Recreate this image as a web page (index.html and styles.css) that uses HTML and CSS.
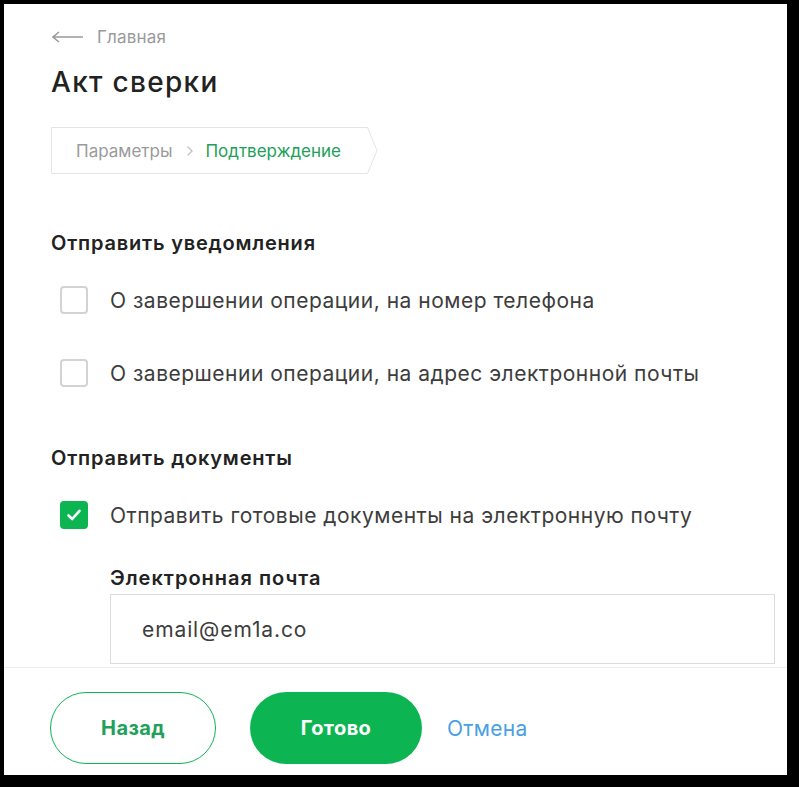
FILE: index.html
```html
<!DOCTYPE html>
<html lang="ru">
<head>
    <meta charset="UTF-8">
    <meta name="viewport" content="width=device-width, initial-scale=1.0">
    <title>Акт сверки</title>
    <link rel="stylesheet" href="styles.css">
</head>
<body>
    <div class="panel">
        <div class="content">
            <a class="back" href="#">
                <svg width="32" height="12" viewBox="0 0 32 12"><path d="M1 6H31M7 1L1 6L7 11" fill="none" stroke="#9a9a9a" stroke-width="1.5"/></svg>
                Главная
            </a>
            <h1 class="title">Акт сверки</h1>

            <div class="steps">
                <svg class="steps-frame" width="328" height="47" viewBox="0 0 328 47"><path d="M0.5 0.5H316.5L326 23.5L316.5 46.5H0.5Z" fill="none" stroke="#e4e4e4"/></svg>
                <span class="step">Параметры</span>
                <svg class="step-sep" width="8" height="12" viewBox="0 0 8 12"><path d="M1.5 1.5L6 6L1.5 10.5" fill="none" stroke="#c4c4c4" stroke-width="1.4"/></svg>
                <span class="step step-active">Подтверждение</span>
            </div>

            <h2 class="section">Отправить уведомления</h2>
            <label class="check">
                <span class="box"></span>
                О завершении операции, на номер телефона
            </label>
            <label class="check check-gap">
                <span class="box"></span>
                О завершении операции, на адрес электронной почты
            </label>

            <h2 class="section section-docs">Отправить документы</h2>
            <label class="check">
                <span class="box box-on">
                    <svg width="16" height="14" viewBox="0 0 16 14"><path d="M2.5 7.5L6.2 11L13.5 2.8" fill="none" stroke="#fff" stroke-width="2.6" stroke-linecap="round" stroke-linejoin="round"/></svg>
                </span>
                Отправить готовые документы на электронную почту
            </label>

            <div class="field">
                <div class="field-label">Электронная почта</div>
                <div class="input">email@em1a.co</div>
            </div>
        </div>

        <div class="footer">
            <button class="btn btn-outline">Назад</button>
            <button class="btn btn-primary">Готово</button>
            <a class="cancel" href="#">Отмена</a>
        </div>
    </div>
</body>
</html>
```

FILE: styles.css
```css
:root {
    --green: #0db552;
    --green-text: #21a05a;
    --text-color: #3d3d3d;
    --heading-color: #222;
    --muted: #9a9a9a;
    --line: #e4e4e4;
}

html, body {
    margin: 0;
    height: 100%;
}

body {
    background-color: #000;
    padding: 4px 12px 12px 4px;
    box-sizing: border-box;
    font-family: 'Inter', 'Roboto', sans-serif;
    color: var(--text-color);
}

.panel {
    background-color: #fff;
    height: 771px;
    display: flex;
    flex-direction: column;
    overflow: hidden;
}

.content {
    padding: 23px 0 0 47px;
    flex: none;
}

.back {
    display: flex;
    align-items: center;
    gap: 13px;
    height: 20px;
    color: var(--muted);
    text-decoration: none;
    font-size: 17px;
    letter-spacing: 0.2px;
    margin-left: 1px;
}

.title {
    margin: 18px 0 0;
    font-size: 28px;
    line-height: 34px;
    font-weight: 500;
    color: var(--heading-color);
    letter-spacing: 1.3px;
}

.steps {
    position: relative;
    margin-top: 28px;
    height: 47px;
    width: 328px;
    display: flex;
    align-items: center;
    padding-left: 25px;
    box-sizing: border-box;
    font-size: 17px;
}

.steps-frame {
    position: absolute;
    left: 0;
    top: 0;
}

.step {
    color: var(--muted);
}

.step-sep {
    margin: 0 11px 0 14px;
}

.step-active {
    color: var(--green-text);
}

.section {
    margin: 57px 0 0;
    font-size: 20px;
    line-height: 24px;
    font-weight: 600;
    color: var(--heading-color);
    letter-spacing: 0.8px;
}

.section-docs {
    margin-top: 59px;
}

.check {
    display: flex;
    align-items: center;
    gap: 22px;
    margin: 31px 0 0 9px;
    height: 28px;
    font-size: 21px;
    letter-spacing: 0.5px;
}

.check-gap {
    margin-top: 45px;
}

.box {
    width: 28px;
    height: 28px;
    box-sizing: border-box;
    border: 2px solid #d3d3d3;
    border-radius: 4px;
    flex: none;
    display: flex;
    align-items: center;
    justify-content: center;
}

.box-on {
    background-color: var(--green);
    border-color: var(--green);
}

.field {
    margin: 37px 0 0 59px;
}

.field-label {
    font-size: 20px;
    line-height: 24px;
    font-weight: 600;
    color: var(--heading-color);
    letter-spacing: 1px;
}

.input {
    margin-top: 4px;
    width: 665px;
    height: 70px;
    box-sizing: border-box;
    border: 1px solid #dcdcdc;
    padding-left: 31px;
    display: flex;
    align-items: center;
    font-size: 21px;
    letter-spacing: 0.9px;
}

.footer {
    margin-top: 3px;
    border-top: 1px solid #eee;
    padding: 24px 0 0 46px;
    display: flex;
    align-items: center;
}

.btn {
    height: 72px;
    border-radius: 36px;
    font-family: inherit;
    font-size: 20px;
    font-weight: 700;
    letter-spacing: 0.4px;
    cursor: pointer;
}

.btn-outline {
    width: 166px;
    background-color: #fff;
    border: 1.5px solid var(--green);
    color: var(--green-text);
}

.btn-primary {
    width: 172px;
    margin-left: 34px;
    background-color: var(--green);
    border: none;
    color: #fff;
}

.cancel {
    margin-left: 25px;
    font-size: 21px;
    letter-spacing: 0.3px;
    color: #4a9fe3;
    text-decoration: none;
}
```
